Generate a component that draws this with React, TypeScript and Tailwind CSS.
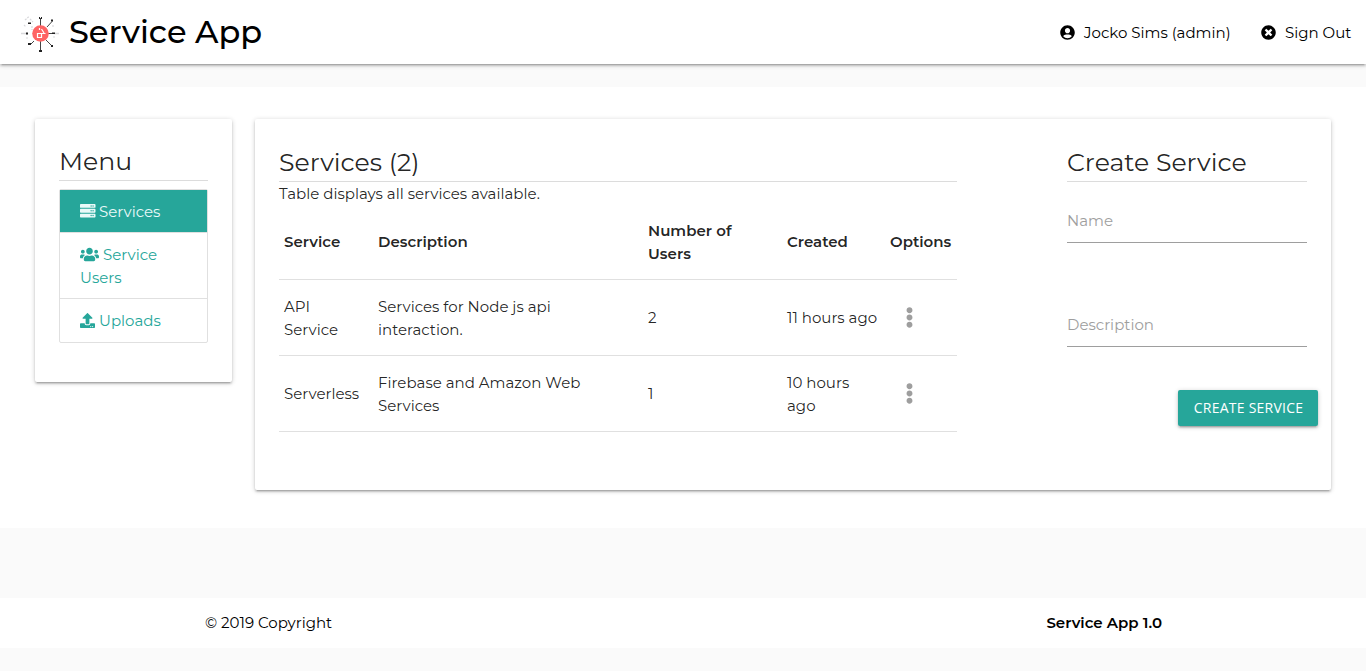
import type { ReactNode } from 'react';
import { FaUserCircle, FaTimesCircle, FaServer, FaUsers, FaUpload, FaEllipsisV } from 'react-icons/fa';

const cardShadow =
  'shadow-[0_2px_2px_0_rgba(0,0,0,0.14),0_3px_1px_-2px_rgba(0,0,0,0.12),0_1px_5px_0_rgba(0,0,0,0.2)]';

function Logo() {
  return (
    <svg width="40" height="40" viewBox="0 0 40 40" className="mt-[2px] shrink-0">
      <g fill="none" stroke="#d9d9dc">
        <path d="M1 20.500h6M34 20.500h5" strokeWidth="1.5" />
        <path d="M5 7l4-3.500M4 12l2 2M33 12v2M12 13v4M6 25h3M10 6l3 3M33 24h2" strokeWidth="1.200" strokeDasharray="2 1" />
      </g>
      <path d="M20.500 5v8M20.500 28v10M27 14l5-5.500M26 27l6 6M14 28l-4 4M28 20.500h6" stroke="#444" strokeWidth="1" fill="none" />
      <path
        d="M19 37h3v2h-3zM31 6.500h2v2h-2zM31 32h2v2h-2zM8 30h3v2H8zM8 9.500h3V11H8zM6 19.500h2v2H6zM32 19.500h3v1.500h-3zM19 4h1v2h-1zM21 4h1v2h-1z"
        fill="#222"
      />
      <circle cx="20.500" cy="20.500" r="8.300" fill="#ff6464" />
      <path d="M17.500 20.500h4v4h-4zM19.500 15v2M21.500 16l2.500 4M21.500 20.500h4" fill="none" stroke="#fff" strokeWidth="1.2" />
    </svg>
  );
}

function Heading({ children, className }: { children: ReactNode; className: string }) {
  return (
    <h2 className={`border-b border-[#dcdcdc] text-[25.2px] leading-[30px] text-black/87 ${className}`}>
      {children}
    </h2>
  );
}

function Header() {
  return (
    <header className="relative flex h-16 items-center justify-between bg-white pr-[15px] pl-5 text-black shadow-[0_2px_2px_0_rgba(0,0,0,0.14),0_3px_1px_-2px_rgba(0,0,0,0.12),0_1px_5px_0_rgba(0,0,0,0.2)]">
      <div className="flex items-center">
        <Logo />
        <span className="ml-[9px] text-[32px] leading-[62px] font-medium">Service App</span>
      </div>
      <nav className="flex items-center">
        <a className="flex items-center">
          <FaUserCircle size={15} />
          <span className="ml-[9px] w-[147px] whitespace-nowrap">Jocko Sims (admin)</span>
        </a>
        <a className="ml-[30px] flex items-center">
          <FaTimesCircle size={15} />
          <span className="ml-[9px] w-[66px] whitespace-nowrap">Sign Out</span>
        </a>
      </nav>
    </header>
  );
}

function Menu() {
  return (
    <aside className={`h-[263px] w-[197px] shrink-0 rounded-[2px] bg-white px-6 pt-[27px] ${cardShadow}`}>
      <Heading className="h-[35px]">Menu</Heading>
      <ul className="mt-2 divide-y divide-[#e0e0e0] rounded-[2px] border border-[#e0e0e0] text-[#26a69a]">
        <li className="flex h-[43px] items-center bg-[#26a69a] pl-5 text-[#eafaf9]">
          <FaServer size={15.5} />
          <span className="ml-[3.5px]">Services</span>
        </li>
        <li className="h-[66px] pt-[10px] pl-5">
          <div className="flex items-center">
            <FaUsers size={19} />
            <span className="ml-1">Service</span>
          </div>
          <div>Users</div>
        </li>
        <li className="flex h-[43px] items-center pl-5">
          <FaUpload size={15} />
          <span className="ml-1">Uploads</span>
        </li>
      </ul>
    </aside>
  );
}

const rows = [
  {
    service: 'API Service',
    description: 'Services for Node js api interaction.',
    users: '2',
    created: '11 hours ago',
  },
  {
    service: 'Serverless',
    description: 'Firebase and Amazon Web Services',
    users: '1',
    created: '10 hours ago',
  },
];

function ServicesTable() {
  return (
    <section className="w-[678px] text-black/87">
      <Heading className="h-[36px] pt-px">Services (2)</Heading>
      <p>Table displays all services available.</p>
      <table className="w-full table-fixed border-separate border-spacing-0 text-left">
        <colgroup>
          <col className="w-[94px]" />
          <col className="w-[270px]" />
          <col className="w-[139px]" />
          <col className="w-[103px]" />
          <col className="w-[72px]" />
        </colgroup>
        <thead>
          <tr className="h-[75px] *:border-b *:border-[#e0e0e0] *:pl-[5px] *:font-semibold">
            <th className="pb-0.5">Service</th>
            <th className="pb-0.5">Description</th>
            <th className="pr-9">Number of Users</th>
            <th className="pb-0.5">Created</th>
            <th className="pb-0.5">Options</th>
          </tr>
        </thead>
        <tbody>
          {rows.map((row) => (
            <tr key={row.users} className="h-[76px] *:border-b *:border-[#e0e0e0] *:pl-[5px]">
              <td className="pr-3">{row.service}</td>
              <td className="pr-14">{row.description}</td>
              <td>{row.users}</td>
              <td className="pr-[5px]">{row.created}</td>
              <td>
                <FaEllipsisV className="ml-[9px] text-[#9e9e9e]" size={21} />
              </td>
            </tr>
          ))}
        </tbody>
      </table>
    </section>
  );
}

function CreateService() {
  return (
    <section className="w-60">
      <Heading className="h-[36px] pt-px">Create Service</Heading>
      <div className="flex h-[61px] flex-col justify-end border-b border-[#9e9e9e] pb-[10px] text-[#9e9e9e]">
        Name
      </div>
      <div className="flex h-[104px] flex-col justify-end border-b border-[#9e9e9e] pb-[10px] text-[#9e9e9e]">
        Description
      </div>
      <button
        className={`mt-[43px] ml-[111px] block h-9 w-[140px] rounded-[2px] bg-[#26a69a] pb-px pl-px font-['Open_Sans',sans-serif] text-[14px] tracking-[0.24px] whitespace-nowrap text-white ${cardShadow}`}
      >
        CREATE SERVICE
      </button>
    </section>
  );
}

export default function App() {
  return (
    <div className="h-[671px] overflow-hidden bg-[#fafafa] font-['Montserrat',sans-serif] text-[15px] leading-[23px]">
      <Header />
      <main className="mt-[23px] flex h-[441px] items-start bg-white pt-8 pl-[35px]">
        <Menu />
        <div
          className={`ml-[23px] flex h-[371px] w-[1076px] justify-between rounded-[2px] bg-white px-6 pt-[27px] ${cardShadow}`}
        >
          <ServicesTable />
          <CreateService />
        </div>
      </main>
      <footer className="mt-[70px] flex h-[50px] items-center justify-between bg-white pr-[204px] pb-px pl-[205px] text-black">
        <span>© 2019 Copyright</span>
        <span className="font-semibold">Service App 1.0</span>
      </footer>
    </div>
  );
}
